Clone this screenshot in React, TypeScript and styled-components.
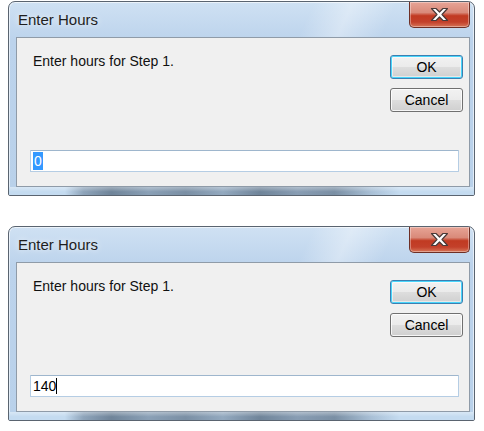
import React from "react";
import styled, { createGlobalStyle } from "styled-components";

const Global = createGlobalStyle`
  html, body { margin: 0; padding: 0; background: #ffffff; }
  body { font-family: "Liberation Sans", Arial, sans-serif; }
`;

const Page = styled.div`
  display: flex;
  flex-direction: column;
  gap: 30px;
  padding: 1px 0 0 8px;
  width: 484px;
  height: 431px;
  box-sizing: border-box;
`;

const Frame = styled.div`
  width: 467px;
  height: 195px;
  box-sizing: border-box;
  border: 1px solid #5a6470;
  border-radius: 7px 7px 2px 2px;
  background:
    linear-gradient(115deg, rgba(255,255,255,0) 0 55%, rgba(255,255,255,0.35) 62%, rgba(255,255,255,0) 70%),
    linear-gradient(180deg, #cfe1f3 0%, #bcd3ec 20%, #b9d1ea 100%);
  display: flex;
  flex-direction: column;
  padding: 0 4px 0 7px;
  box-shadow: inset 0 0 0 1px rgba(255,255,255,0.6);
  overflow: hidden;
`;

const BottomGlass = styled.div`
  height: 8px;
  margin: 0 -4px 0 -7px;
  background:
    linear-gradient(180deg, rgba(255,255,255,0.35) 0%, rgba(255,255,255,0) 60%),
    linear-gradient(90deg,
      #c4dbf0 0%, #c4dbf0 12%, #8ea4ba 16%, #6f8499 22%, #8aa0b6 30%, #7a8fa4 38%,
      #93a9bf 46%, #6f8499 54%, #889db3 62%, #7a8fa4 70%, #a9c0d6 78%, #c4dbf0 84%, #c4dbf0 100%);
`;

const TitleBar = styled.div`
  height: 35px;
  display: flex;
  align-items: flex-start;
  justify-content: space-between;
`;

const Title = styled.span`
  font-family: "Liberation Sans", Arial, sans-serif;
  font-size: 15px;
  color: #1e1e1e;
  margin: 9px 0 0 2px;
  text-shadow: 0 0 6px rgba(255,255,255,0.9);
`;

const CloseButton = styled.div`
  width: 61px;
  height: 26px;
  box-sizing: border-box;
  border: 1px solid #6e2f25;
  border-top: none;
  border-radius: 0 0 5px 5px;
  background: linear-gradient(180deg, #e7a496 0%, #d98a7a 42%, #c13a22 55%, #c3402a 80%, #d67558 100%);
  box-shadow: inset 0 0 0 1px rgba(255,255,255,0.35);
  display: flex;
  align-items: center;
  justify-content: center;
`;

const Panel = styled.div`
  flex: 1;
  background: #f0f0f0;
  border: 1px solid #8f9ba8;
  display: flex;
  flex-direction: column;
  padding: 17px 6px 14px 13px;
  box-sizing: border-box;
`;

const TopRow = styled.div`
  flex: 1;
  display: flex;
  justify-content: space-between;
  align-items: flex-start;
`;

const Prompt = styled.div`
  font-size: 14px;
  color: #111;
  margin: -2px 0 0 3px;
`;

const Buttons = styled.div`
  display: flex;
  flex-direction: column;
  gap: 9px;
`;

const Button = styled.div<{ $default?: boolean }>`
  width: 73px;
  height: 24px;
  box-sizing: border-box;
  border-radius: 3px;
  border: 1px solid ${(p) => (p.$default ? "#3c7fb1" : "#707070")};
  background: linear-gradient(180deg, #f2f2f2 0%, #ebebeb 48%, #dddddd 52%, #cfcfcf 100%);
  box-shadow: ${(p) =>
    p.$default
      ? "inset 0 0 0 1px #48d5fb, inset 0 0 0 2px rgba(255,255,255,0.5)"
      : "inset 0 0 0 1px rgba(255,255,255,0.8)"};
  display: flex;
  align-items: center;
  justify-content: center;
  font-size: 14px;
  color: #000;
`;

const Input = styled.div`
  height: 22px;
  margin-right: 4px;
  box-sizing: border-box;
  background: #fff;
  border: 1px solid #b5cde4;
  border-top-color: #9eb6cd;
  border-radius: 1px;
  display: flex;
  align-items: center;
  padding-left: 2px;
  font-size: 14px;
  color: #000;
`;

const Selected = styled.span`
  background: #3399ff;
  color: #fff;
  padding: 1px 1px;
`;

const Caret = styled.span`
  display: inline-block;
  width: 1px;
  height: 16px;
  background: #000;
`;

const CloseIcon = () => (
  <svg width="19" height="15" viewBox="0 0 19 15">
    <path
      d="M1.5 1.5 H6 L9.5 5 L13 1.5 H17.5 L12 7.5 L17.5 13.5 H13 L9.5 10 L6 13.5 H1.5 L7 7.5 Z"
      fill="#ffffff"
      stroke="#4a3a38"
      strokeWidth="1.2"
      strokeLinejoin="round"
    />
  </svg>
);

const Dialog: React.FC<{ value: React.ReactNode }> = ({ value }) => (
  <Frame>
    <TitleBar>
      <Title>Enter Hours</Title>
      <CloseButton>
        <CloseIcon />
      </CloseButton>
    </TitleBar>
    <Panel>
      <TopRow>
        <Prompt>Enter hours for Step 1.</Prompt>
        <Buttons>
          <Button $default>OK</Button>
          <Button>Cancel</Button>
        </Buttons>
      </TopRow>
      <Input>{value}</Input>
    </Panel>
    <BottomGlass />
  </Frame>
);

export default function App() {
  return (
    <>
      <Global />
      <Page>
        <Dialog value={<Selected>0</Selected>} />
        <Dialog
          value={
            <>
              <span>140</span>
              <Caret />
            </>
          }
        />
      </Page>
    </>
  );
}
